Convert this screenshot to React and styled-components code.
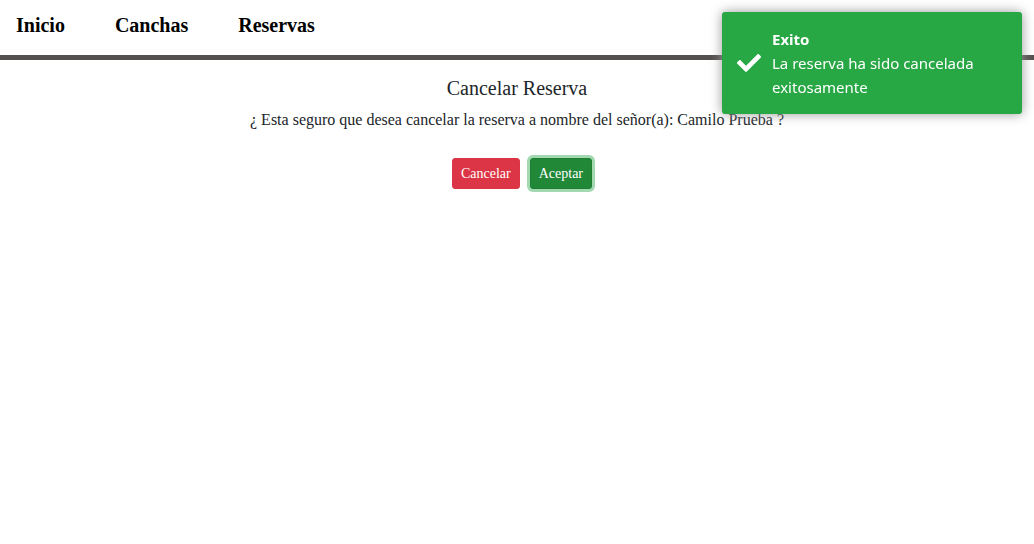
import React from "react";
import styled, { createGlobalStyle } from "styled-components";

const GlobalStyle = createGlobalStyle`
  *, *::before, *::after { box-sizing: border-box; }
  body {
    margin: 0;
    background: #fff;
    color: #212529;
    font-family: "Times New Roman", "Liberation Serif", serif;
    font-size: 16px;
    line-height: 24px;
  }
`;

const Header = styled.header`
  border-bottom: 5px solid #545050;
  padding: 10px 16px 15px;
`;

const Nav = styled.nav`
  display: flex;
  gap: 50px;
`;

const NavLink = styled.a`
  color: #000;
  font-size: 20px;
  font-weight: 700;
  line-height: 30px;
  text-decoration: none;
`;

const Main = styled.main`
  padding: 16px;
  text-align: center;
`;

const Title = styled.h1`
  margin: 0 0 8px;
  font-size: 20px;
  font-weight: 400;
  line-height: 24px;
`;

const Question = styled.p`
  margin: 0 0 26px;
`;

const Actions = styled.div`
  display: flex;
  justify-content: center;
`;

const Button = styled.button`
  margin-left: 10px;
  padding: 4px 8px;
  border: 1px solid ${(p) => p.$border};
  border-radius: 3px;
  background: ${(p) => p.$color};
  color: #fff;
  font-family: inherit;
  font-size: 14px;
  line-height: 21px;
  cursor: pointer;
  box-shadow: ${(p) => (p.$ring ? "0 0 0 3px rgba(72, 180, 97, 0.5)" : "none")};
`;

const Toast = styled.div`
  position: fixed;
  top: 12px;
  right: 12px;
  display: flex;
  align-items: center;
  gap: 11px;
  width: 300px;
  padding: 15px;
  border-radius: 3px;
  background: #28a745;
  box-shadow: 0 0 12px #999;
  color: #fff;
  font-family: "Segoe UI", "Noto Sans", "Open Sans", sans-serif;
  font-size: 15px;
`;

const CheckIcon = styled.svg`
  flex: none;
  width: 24px;
  height: 24px;
  fill: #fff;
`;

const ToastTitle = styled.div`
  font-weight: 700;
`;

const CHECK_PATH =
  "M173.898 439.404l-166.4-166.4c-9.997-9.997-9.997-26.206 0-36.204l36.203-36.204c9.997-9.998 26.207-9.998 36.204 0L192 312.69 432.095 72.596c9.997-9.997 26.207-9.997 36.204 0l36.203 36.204c9.997 9.997 9.997 26.206 0 36.204l-294.4 294.401c-9.998 9.997-26.207 9.997-36.204-.001z";

export default function App() {
  return (
    <>
      <GlobalStyle />
      <Header>
        <Nav>
          <NavLink href="#inicio">Inicio</NavLink>
          <NavLink href="#canchas">Canchas</NavLink>
          <NavLink href="#reservas">Reservas</NavLink>
        </Nav>
      </Header>
      <Main>
        <Title>Cancelar Reserva</Title>
        <Question>
          ¿ Esta seguro que desea cancelar la reserva a nombre del señor(a): Camilo Prueba ?
        </Question>
        <Actions>
          <Button type="button" $color="#dc3545" $border="#dc3545">Cancelar</Button>
          <Button type="button" $color="#218838" $border="#1e7e34" $ring>Aceptar</Button>
        </Actions>
      </Main>
      <Toast role="alert">
        <CheckIcon viewBox="0 0 512 512" aria-hidden="true">
          <path d={CHECK_PATH} />
        </CheckIcon>
        <div>
          <ToastTitle>Exito</ToastTitle>
          <div>La reserva ha sido cancelada exitosamente</div>
        </div>
      </Toast>
    </>
  );
}
